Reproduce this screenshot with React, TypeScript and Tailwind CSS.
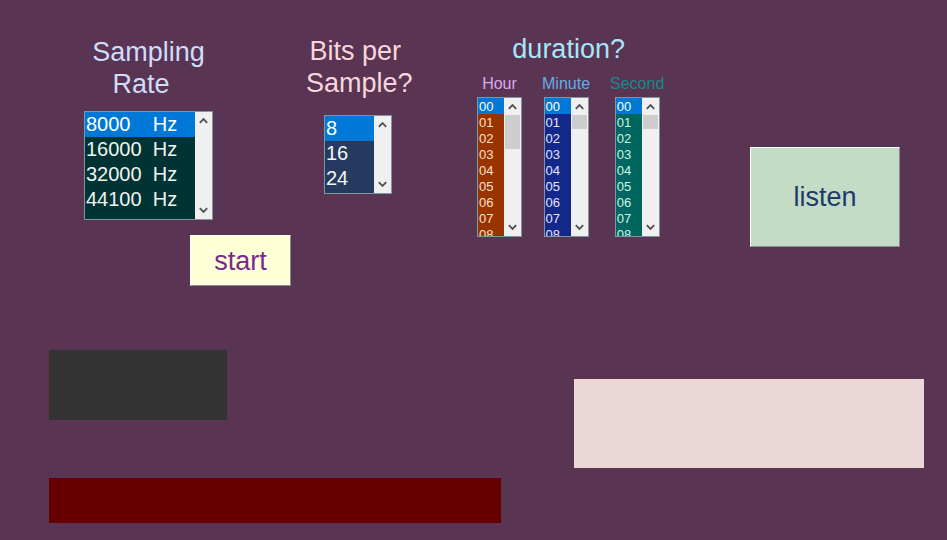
import { useRef } from "react";
import clsx from "clsx";

type ListBoxProps = {
  id: string;
  label: string;
  options: string[];
  large?: boolean;
  boxClass: string;
  listClass: string;
  thumbClass?: string;
};

function Chevron({ down = false }: { down?: boolean }) {
  return (
    <svg width="9" height="7" viewBox="0 0 9 7" aria-hidden="true">
      <path
        d={down ? "M0.8 1.2 L4.5 4.9 L8.2 1.2" : "M0.8 5.8 L4.5 2.1 L8.2 5.8"}
        fill="none"
        stroke="#505050"
        strokeWidth="1.8"
      />
    </svg>
  );
}

function ListBox({ id, label, options, large = false, boxClass, listClass, thumbClass }: ListBoxProps) {
  const list = useRef<HTMLSelectElement>(null);
  const step = large ? 25 : 16;
  const scroll = (amount: number) => list.current?.scrollBy({ top: amount });

  return (
    <div className={clsx("flex border border-[#8296a0] bg-[#f0f0f0]", boxClass)}>
      <select
        ref={list}
        id={id}
        size={options.length}
        defaultValue={options[0]}
        className={clsx(
          "h-full min-w-0 flex-1 overflow-y-auto rounded-none border-0 p-0 outline-none [scrollbar-width:none]",
          large ? "text-[20px]" : "text-[13px]",
          listClass,
        )}
      >
        {options.map((option) => (
          <option
            key={option}
            value={option}
            className={clsx(
              "min-h-0 p-0 checked:bg-[linear-gradient(#0078d7,#0078d7)] checked:[-webkit-text-fill-color:white]",
              large ? "h-[25px] pt-px pl-px leading-[26px]" : "h-4 pt-px pl-px leading-4",
            )}
          >
            {option}
          </option>
        ))}
      </select>
      <div className="flex w-[17px] flex-col">
        <button
          type="button"
          aria-label={`Scroll ${label} up`}
          onClick={() => scroll(-step)}
          className="flex h-[17px] items-center justify-center"
        >
          <Chevron />
        </button>
        <div className="flex-1">
          {thumbClass && <div className={clsx("mx-px bg-[#cdcdcd]", thumbClass)} />}
        </div>
        <button
          type="button"
          aria-label={`Scroll ${label} down`}
          onClick={() => scroll(step)}
          className="flex h-[17px] items-center justify-center"
        >
          <Chevron down />
        </button>
      </div>
    </div>
  );
}

const rates = [
  "8000\u00a0\u00a0\u00a0\u00a0Hz",
  "16000\u00a0\u00a0Hz",
  "32000\u00a0\u00a0Hz",
  "44100\u00a0\u00a0Hz",
];
const bits = ["8", "16", "24"];
const count = (n: number) => Array.from({ length: n }, (_, i) => String(i).padStart(2, "0"));

const units = [
  { id: "hour", label: "Hour", values: count(24), text: "text-[#d9a9ef]", list: "bg-[#993300] text-[#ffe0c8]", thumb: "h-[34px]" },
  { id: "minute", label: "Minute", values: count(60), text: "text-[#62aee8]", list: "bg-[#14288c] text-[#e8e4ff]", thumb: "h-[14px]" },
  { id: "second", label: "Second", values: count(60), text: "text-[#168a8a]", list: "bg-[#006660] text-[#d0f5e4]", thumb: "h-[14px]" },
];

const raised = "border border-t-white border-l-white border-r-[#8a8a8a] border-b-[#8a8a8a]";

export default function App() {
  return (
    <main className="min-h-screen bg-[#593453] font-['Liberation_Sans',Arial,sans-serif] text-[27px] leading-8">
      <section className="grid grid-cols-[222fr_171fr_273fr_150fr] pt-[33px] pr-[47px] pl-[84px]">
        <div className="pt-[3px]">
          <label htmlFor="rate" className="block w-[129px] text-center text-[#d0dcfa]">
            Sampling
            <br />
            Rate{"\u00a0\u00a0"}
          </label>
          <ListBox
            id="rate"
            label="sampling rate"
            options={rates}
            large
            boxClass="mt-[11px] h-[109px] w-[129px]"
            listClass="bg-[#003333] text-[#f0f4ee]"
          />
          <button
            type="button"
            className={clsx("mt-[15px] ml-[106px] block h-[51px] w-[101px] bg-[#ffffd8] text-[#7a2a8c]", raised)}
          >
            start
          </button>
        </div>

        <div className="pt-[2px]">
          <label htmlFor="bits" className="block w-[106px] text-center whitespace-nowrap text-[#fad6dc]">
            Bits per{"\u00a0"}
            <br />
            Sample?
          </label>
          <ListBox
            id="bits"
            label="bits per sample"
            options={bits}
            large
            boxClass="mt-4 ml-[18px] h-[79px] w-[68px]"
            listClass="bg-[#263a60] text-[#f4f4f4]"
          />
        </div>

        <fieldset className="w-max">
          <legend className="w-full pr-1 text-center text-[#a8e6fa]">duration?</legend>
          <div className="mt-[9px] flex gap-5">
            {units.map((unit) => (
              <div key={unit.id} className="flex min-w-[45px] flex-col items-center">
                <label htmlFor={unit.id} className={clsx("text-base leading-5", unit.text)}>
                  {unit.label}
                </label>
                <ListBox
                  id={unit.id}
                  label={unit.label}
                  options={unit.values}
                  boxClass="mt-[3px] h-[140px] w-[45px]"
                  listClass={unit.list}
                  thumbClass={unit.thumb}
                />
              </div>
            ))}
          </div>
        </fieldset>

        <button type="button" className={clsx("mt-[114px] h-[100px] bg-[#c2dcc6] text-[#22386a]", raised)}>
          listen
        </button>
      </section>

      <section className="grid grid-cols-[525fr_350fr] pt-16 pr-[23px] pl-[49px]">
        <div>
          <div className="h-[70px] w-[178px] max-w-full bg-[#333333]" />
          <div className="mt-[58px] h-[45px] w-[86%] bg-[#660000]" />
        </div>
        <div className="mt-[29px] h-[89px] bg-[#ebd7d5]" />
      </section>
    </main>
  );
}
